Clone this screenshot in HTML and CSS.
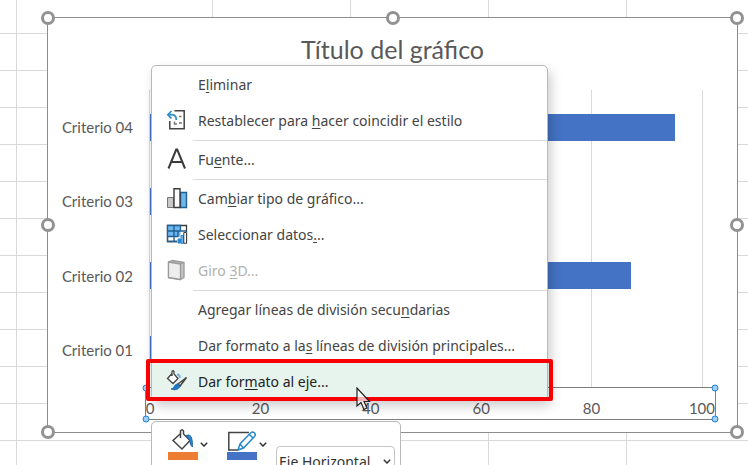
FILE: index.html
```
<!DOCTYPE html>
<html lang="es">
<head>
  <meta charset="UTF-8" />
  <meta name="viewport" content="width=device-width, initial-scale=1" />
  <title>Título del gráfico</title>
  <link rel="stylesheet" href="styles.css">
</head>
<body>
  <main class="sheet">

    <section class="chart">
      <h1 class="chart-title">Título del gráfico</h1>

      <div class="chart-body">
        <div class="categories">
          <span>Criterio 04</span>
          <span>Criterio 03</span>
          <span>Criterio 02</span>
          <span>Criterio 01</span>
        </div>
        <div class="plot">
          <div class="bar" style="width: 95%"></div>
          <div class="bar" style="width: 60%"></div>
          <div class="bar" style="width: 87%"></div>
          <div class="bar" style="width: 45%"></div>
        </div>
      </div>

      <div class="axis">
        <span>0</span>
        <span>20</span>
        <span>40</span>
        <span>60</span>
        <span>80</span>
        <span>100</span>
        <i class="dot top left"></i>
        <i class="dot top right"></i>
        <i class="dot bottom left"></i>
        <i class="dot bottom right"></i>
      </div>

      <i class="handle top left"></i>
      <i class="handle top center"></i>
      <i class="handle top right"></i>
      <i class="handle middle left"></i>
      <i class="handle middle right"></i>
      <i class="handle bottom left"></i>
      <i class="handle bottom right"></i>
    </section>

    <!-- menú contextual -->
    <div class="menu">
      <button type="button" class="item"><span class="icon"></span><span>E<u>l</u>iminar</span></button>
      <button type="button" class="item">
        <svg class="icon" viewBox="0 0 22 22">
          <path d="M8.500 1.800h9.700v18H3.800V12" fill="none" stroke="#444" stroke-width="1.500"/>
          <path d="M13 7.500h2.500M13 14h3M8.500 12.500V15H11" fill="none" stroke="#777" stroke-width="1.500"/>
          <path d="M5.500 2 1.800 5.700l3.700 3.800M2.500 5.700h3.500C9.500 6 10.300 8 10.300 11" fill="none" stroke="#2b8fc9" stroke-width="1.700"/>
        </svg>
        <span>Restablecer para <u>h</u>acer coincidir el estilo</span>
      </button>
      <hr>
      <button type="button" class="item">
        <svg class="icon" viewBox="0 0 22 22">
          <path d="M2.500 20.500 10.200 1.500h1L19 20.500M5.300 14h11" fill="none" stroke="#3b3b3b" stroke-width="2"/>
        </svg>
        <span>Fu<u>e</u>nte...</span>
      </button>
      <hr>
      <button type="button" class="item">
        <svg class="icon" viewBox="0 0 22 22">
          <path d="M1.500 10.500h6v10h-6z" fill="#c8c8c8" stroke="#777"/>
          <path d="M14.500 5.500h6v15h-6z" fill="#6db5ee" stroke="#1f5f91" stroke-width="1.400"/>
          <path d="M8 1.700h6v18.800H8z" fill="#fff" stroke="#3b3b3b" stroke-width="1.400"/>
        </svg>
        <span>Cam<u>b</u>iar tipo de gráfico...</span>
      </button>
      <button type="button" class="item">
        <svg class="icon" viewBox="0 0 22 22">
          <path d="M1.500 2.500h19v16h-19z" fill="#fff" stroke="#3b3b3b" stroke-width="1.300"/>
          <path d="M1.500 2.500h13v11h-13z" fill="#6db5ee"/>
          <path d="M1.500 2.500h13v5.500h-13zM8 2.500v16M1.500 13.500H12V8M1.500 8v10.500h10M14.500 8h6" fill="none" stroke="#1f5f91" stroke-width="1.300"/>
          <path d="M11 15h3.500v-3.500h3V9h3.500v12H11z" fill="#fff"/>
          <path d="M12 16h2.500v4H12z" fill="#2b86d0" stroke="#2b86d0"/>
          <path d="M15 12.500h2.500v7.800H15z" fill="#6db5ee" stroke="#2b86d0"/>
          <path d="M17.800 9.500h2.700v10.800h-2.700z" fill="#fff" stroke="#3b3b3b"/>
        </svg>
        <span>Seleccionar datos<u>.</u>..</span>
      </button>
      <button type="button" class="item" disabled>
        <svg class="icon" viewBox="0 0 22 22">
          <path d="M2.500 3 6 1.500l12 2v15L14.500 20.500l-12-2z" fill="#c4c4c4" stroke="#9a9a9a" stroke-width="1.300" stroke-linejoin="round"/>
          <path d="M2.500 3l12 2v15.500l-12-2z" fill="#eee" stroke="#9a9a9a" stroke-width="1.300" stroke-linejoin="round"/>
          <path d="M14.500 5 18 3.500" stroke="#9a9a9a"/>
        </svg>
        <span>Giro <u>3</u>D...</span>
      </button>
      <hr>
      <button type="button" class="item"><span class="icon"></span><span>Agregar líneas de división secu<u>n</u>darias</span></button>
      <button type="button" class="item"><span class="icon"></span><span>Dar formato a la<u>s</u> líneas de división principales...</span></button>
      <button type="button" class="item active">
        <svg class="icon" viewBox="0 0 22 22">
          <path d="M6 3.500 1.500 8.500l5.500 5 5-5L8 4V1.500q-1-1.500-2 0v4.500" fill="#fff" stroke="#444" stroke-width="1.300"/>
          <path d="M11 4.500q3 0 3 3.500" fill="none" stroke="#6db5ee" stroke-width="1.800"/>
          <path d="M20.500 7.500 12 14l2 2Z" fill="#fff" stroke="#444" stroke-width="1.500"/>
          <path d="M12.500 14q-3-.5-4 2-.5 2.500-3.500 3 6 2.500 9-2.500z" fill="#1f78c8" stroke="#175d9c" stroke-width=".8"/>
        </svg>
        <span>Dar for<u>m</u>ato al eje...</span>
      </button>
    </div>

    <!-- minibarra de herramientas -->
    <div class="toolbar">
      <button type="button" class="tool" aria-label="Relleno">
        <svg class="tool-icon" viewBox="0 0 30 32">
          <path d="M12 6 5 12.500l9 8.500 8-8.500L15.500 6V3q-1.500-2.500-3 0v7" fill="#fff" stroke="#444" stroke-width="1.500"/>
          <path d="M18 7.500q7-3.500 6.500 11.500-2.500-1-3-7z" fill="#2b86d0" stroke="#1b5f9c" stroke-width=".8"/>
          <path d="M0 24h30v8H0z" fill="#ed7d31"/>
        </svg>
        <svg class="arrow" viewBox="0 0 8 5"><path d="M.8.800 4 4 7.200.800"/></svg>
      </button>
      <button type="button" class="tool" aria-label="Contorno">
        <svg class="tool-icon" viewBox="0 0 30 32">
          <path d="M22 4.500H1.800V22H11" fill="none" stroke="#444" stroke-width="1.500"/>
          <path d="m11 22 2-6L24 4.500q2-1 3.500.500t0 3.500L16.500 20zM13 16l3.500 4M22.500 6.500l3.500 3.500" fill="#fff" stroke="#2589ca" stroke-width="1.500"/>
          <path d="M0 24h30v8H0z" fill="#4472c4"/>
        </svg>
        <svg class="arrow" viewBox="0 0 8 5"><path d="M.8.800 4 4 7.200.800"/></svg>
      </button>
      <div class="element">
        <select aria-label="Elemento del gráfico">
          <option>Eje Horizontal (Valor)</option>
        </select>
        <svg class="arrow" viewBox="0 0 8 5"><path d="M.8.800 4 4 7.200.800"/></svg>
      </div>
    </div>

    <svg class="cursor" viewBox="0 0 16 24">
      <path d="M2 1v18l4-3.500 3 7 3-1.500-3-6.500h5.500z" fill="#fff" fill-opacity=".7" stroke="#222" stroke-width="1.200"/>
    </svg>
  </main>
</body>
</html>
```
FILE: styles.css
```
* {
  box-sizing: border-box;
}
body {
  margin: 0;
  font-family: "Noto Sans", "Open Sans", sans-serif;
}
.sheet {
  position: relative;
  height: 100vh;
  padding: 17px 10px 0 47px;
  overflow: hidden;
  background:
    linear-gradient(#d9d9d9, #d9d9d9) 16px 0 / 1px 100% no-repeat,
    repeating-linear-gradient(to right, #d9d9d9 0 1px, transparent 1px 138px) 212px 0 no-repeat,
    repeating-linear-gradient(to bottom, transparent 0 33px, #d9d9d9 33px 34px, transparent 34px 37px) 0 0 / 100% 37px;
  background-color: #fff;
}

/* gráfico */
.chart {
  position: relative;
  padding-bottom: 12px;
  background: #fff;
  border: 1px solid #8c8c8c;
  font-family: Lato, sans-serif;
  color: #595959;
}
.chart-title {
  margin: 0;
  padding: 15px 0 25px;
  font-size: 25px;
  font-weight: normal;
  line-height: 32px;
  text-align: center;
}
.chart-body {
  display: grid;
  grid-template-columns: 101px 1fr;
  height: 297px;
  padding-right: 34px;
}
.categories,
.plot {
  display: grid;
  grid-template-rows: repeat(4, 1fr);
  align-items: center;
}
.categories {
  padding-right: 16px;
  font-size: 15px;
  line-height: 20px;
  text-align: right;
}
.plot {
  border-left: 1px solid #d9d9d9;
  background: repeating-linear-gradient(to right, transparent 0 calc(20% - 1px), #d9d9d9 calc(20% - 1px) 20%);
}
.bar {
  height: 27px;
  background: #4472c4;
}
.axis {
  position: relative;
  display: flex;
  justify-content: space-between;
  height: 33px;
  margin: 0 21px 0 97px;
  border: 1px solid #7f7f7f;
  font-size: 15px;
  line-height: 41px;
}
.axis span {
  width: 40px;
  text-align: center;
}
/* los números quedan centrados sobre las líneas de división */
.axis span:first-of-type {
  margin-left: -16px;
}
.axis span:last-of-type {
  margin-right: -7px;
}
.dot,
.handle {
  position: absolute;
  border-radius: 50%;
  transform: translate(-50%, -50%);
}
.dot {
  width: 7px;
  height: 7px;
  background: #9fd0fa;
  border: 1px solid #2580d0;
}
.handle {
  width: 14px;
  height: 14px;
  background: #fff;
  border: 3px solid #929292;
}
.top { top: 0; }
.middle { top: 50%; }
.bottom { top: 100%; }
.left { left: 0; }
.center { left: 50%; }
.right { left: 100%; }

/* menú */
.menu {
  position: absolute;
  top: 65px;
  left: 151px;
  width: 397px;
  background: #fff;
  border: 1px solid #b8b8b8;
  border-radius: 5px;
  box-shadow: 3px 6px 12px rgba(0, 0, 0, 0.2);
}
.item {
  position: relative;
  display: flex;
  align-items: center;
  gap: 10px;
  width: 100%;
  height: 36px;
  padding: 0 14px;
  background: none;
  border: 0;
  font: 14px "Noto Sans", "Open Sans", sans-serif;
  color: #444;
  text-align: left;
  white-space: nowrap;
}
.item:disabled {
  color: #b1b1b1;
}
.item u {
  text-underline-offset: 2px;
}
.icon {
  flex: none;
  width: 22px;
  height: 22px;
}
.menu hr {
  height: 1px;
  margin: 2px 0 0 41px;
  border: 0;
  background: #dadada;
}
.active {
  background: #e7f4ed;
  color: #222;
}
.active::after {
  content: "";
  position: absolute;
  inset: -4px -6px -2px;
  border: 4px solid #f80000;
  border-radius: 2px;
}

/* minibarra */
.toolbar {
  position: absolute;
  top: 421px;
  left: 151px;
  display: flex;
  align-items: flex-start;
  width: 250px;
  height: 70px;
  padding: 6px 5px 0 16px;
  background: #fff;
  border: 1px solid #b8b8b8;
  border-radius: 5px;
}
.tool {
  display: flex;
  align-items: center;
  gap: 2px;
  width: 59px;
  padding: 0;
  background: none;
  border: 0;
}
.tool-icon {
  width: 30px;
  height: 32px;
}
.arrow {
  width: 8px;
  height: 5px;
  fill: none;
  stroke: #333;
  stroke-width: 1.5;
}
.element {
  position: relative;
  flex: 1;
  margin: 18px 0 0 -10px;
}
.element select {
  width: 100%;
  height: 30px;
  padding: 0 20px 0 2px;
  appearance: none;
  background: #fff;
  border: 1px solid #c4c4c4;
  border-radius: 4px;
  font: 14px "Noto Sans", "Open Sans", sans-serif;
  color: #333;
}
.element .arrow {
  position: absolute;
  top: 13px;
  right: 4px;
}

.cursor {
  position: absolute;
  top: 387px;
  left: 355px;
  width: 16px;
  height: 24px;
}
```
